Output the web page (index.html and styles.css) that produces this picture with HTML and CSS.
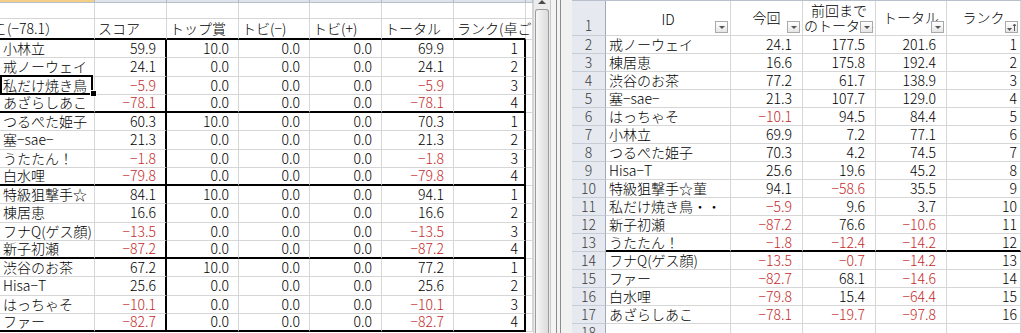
FILE: index.html
```html
<!DOCTYPE html>
<html lang="ja">
<head>
<meta charset="utf-8">
<title>Sheet</title>
<link rel="stylesheet" href="styles.css">
</head>
<body>
<div class="app">
  <div class="left">
    <div class="strip lcols">
      <div class="sc selc"></div><div class="sc"></div><div class="sc"></div><div class="sc"></div><div class="sc"></div><div class="sc"></div><div class="sc"></div><div class="sc"></div>
    </div>
    <div class="lg">
      <div class="c"></div><div class="c"></div><div class="c"></div><div class="c"></div><div class="c"></div><div class="c"></div><div class="c"></div><div class="c"></div>

      <div class="c bb hd clip"><span class="shift">こ(−78.1）</span></div><div class="c bb hd">スコア</div><div class="c bb hd">トップ賞</div><div class="c bb hd">トビ(−)</div><div class="c bb hd">トビ(+)</div><div class="c bb hd">トータル</div><div class="c bb hd">ランク(卓ごと)</div><div class="c hd"></div>

      <div class="c">小林立</div><div class="c n tb">59.9</div><div class="c n">10.0</div><div class="c n">0.0</div><div class="c n">0.0</div><div class="c n">69.9</div><div class="c r tb">1</div><div class="c"></div>
      <div class="c">戒ノーウェイ</div><div class="c n tb">24.1</div><div class="c n">0.0</div><div class="c n">0.0</div><div class="c n">0.0</div><div class="c n">24.1</div><div class="c r tb">2</div><div class="c"></div>
      <div class="c sel"><span class="clipname">私だけ焼き鳥・・</span></div><div class="c n tb neg">−5.9</div><div class="c n">0.0</div><div class="c n">0.0</div><div class="c n">0.0</div><div class="c n neg">−5.9</div><div class="c r tb">3</div><div class="c"></div>
      <div class="c bb">あざらしあこ</div><div class="c n tb bb neg">−78.1</div><div class="c n bb">0.0</div><div class="c n bb">0.0</div><div class="c n bb">0.0</div><div class="c n bb neg">−78.1</div><div class="c r tb bb">4</div><div class="c"></div>

      <div class="c">つるぺた姫子</div><div class="c n tb">60.3</div><div class="c n">10.0</div><div class="c n">0.0</div><div class="c n">0.0</div><div class="c n">70.3</div><div class="c r tb">1</div><div class="c"></div>
      <div class="c">塞−sae−</div><div class="c n tb">21.3</div><div class="c n">0.0</div><div class="c n">0.0</div><div class="c n">0.0</div><div class="c n">21.3</div><div class="c r tb">2</div><div class="c"></div>
      <div class="c">うたたん！</div><div class="c n tb neg">−1.8</div><div class="c n">0.0</div><div class="c n">0.0</div><div class="c n">0.0</div><div class="c n neg">−1.8</div><div class="c r tb">3</div><div class="c"></div>
      <div class="c bb">白水哩</div><div class="c n tb bb neg">−79.8</div><div class="c n bb">0.0</div><div class="c n bb">0.0</div><div class="c n bb">0.0</div><div class="c n bb neg">−79.8</div><div class="c r tb bb">4</div><div class="c"></div>

      <div class="c">特級狙撃手☆</div><div class="c n tb">84.1</div><div class="c n">10.0</div><div class="c n">0.0</div><div class="c n">0.0</div><div class="c n">94.1</div><div class="c r tb">1</div><div class="c"></div>
      <div class="c">棟居恵</div><div class="c n tb">16.6</div><div class="c n">0.0</div><div class="c n">0.0</div><div class="c n">0.0</div><div class="c n">16.6</div><div class="c r tb">2</div><div class="c"></div>
      <div class="c clip">フナQ(ゲス顔)</div><div class="c n tb neg">−13.5</div><div class="c n">0.0</div><div class="c n">0.0</div><div class="c n">0.0</div><div class="c n neg">−13.5</div><div class="c r tb">3</div><div class="c"></div>
      <div class="c bb">新子初瀬</div><div class="c n tb bb neg">−87.2</div><div class="c n bb">0.0</div><div class="c n bb">0.0</div><div class="c n bb">0.0</div><div class="c n bb neg">−87.2</div><div class="c r tb bb">4</div><div class="c"></div>

      <div class="c">渋谷のお茶</div><div class="c n tb">67.2</div><div class="c n">10.0</div><div class="c n">0.0</div><div class="c n">0.0</div><div class="c n">77.2</div><div class="c r tb">1</div><div class="c"></div>
      <div class="c">Hisa−T</div><div class="c n tb">25.6</div><div class="c n">0.0</div><div class="c n">0.0</div><div class="c n">0.0</div><div class="c n">25.6</div><div class="c r tb">2</div><div class="c"></div>
      <div class="c">はっちゃそ</div><div class="c n tb neg">−10.1</div><div class="c n">0.0</div><div class="c n">0.0</div><div class="c n">0.0</div><div class="c n neg">−10.1</div><div class="c r tb">3</div><div class="c"></div>
      <div class="c bb">ファー</div><div class="c n tb bb neg">−82.7</div><div class="c n bb">0.0</div><div class="c n bb">0.0</div><div class="c n bb">0.0</div><div class="c n bb neg">−82.7</div><div class="c r tb bb">4</div><div class="c"></div>
    </div>
  </div>

  <div class="vs">
    <div class="up"><span class="tri"></span></div>
    <div class="thumb"></div>
  </div>

  <div class="split"></div>

  <div class="right">
    <div class="strip rcols">
      <div class="sc corner"></div><div class="sc"></div><div class="sc"></div><div class="sc"></div><div class="sc"></div><div class="sc"></div>
    </div>
    <div class="rg">
      <div class="rh rh1">1</div>
      <div class="c hc hid">ID<span class="fb"><span class="dt"></span></span></div>
      <div class="c hc">今回<span class="fb"><span class="dt"></span></span></div>
      <div class="c hc">前回まで<br>のトータル<span class="fb"><span class="dt"></span></span></div>
      <div class="c hc">トータル<span class="fb"><span class="dt"></span></span></div>
      <div class="c hc">ランク<span class="fb sort"><svg width="11" height="9" viewBox="0 0 11 9"><path d="M1 5h5l-2.5 3z" fill="#555"/><path d="M8.5 8V1.5M7 3l1.5-2 1.5 2" stroke="#555" stroke-width="1" fill="none"/></svg></span></div>

      <div class="rh">2</div><div class="c">戒ノーウェイ</div><div class="c m">24.1</div><div class="c m">177.5</div><div class="c m">201.6</div><div class="c rr">1</div>
      <div class="rh">3</div><div class="c">棟居恵</div><div class="c m">16.6</div><div class="c m">175.8</div><div class="c m">192.4</div><div class="c rr">2</div>
      <div class="rh">4</div><div class="c">渋谷のお茶</div><div class="c m">77.2</div><div class="c m">61.7</div><div class="c m">138.9</div><div class="c rr">3</div>
      <div class="rh">5</div><div class="c">塞−sae−</div><div class="c m">21.3</div><div class="c m">107.7</div><div class="c m">129.0</div><div class="c rr">4</div>
      <div class="rh">6</div><div class="c">はっちゃそ</div><div class="c m neg">−10.1</div><div class="c m">94.5</div><div class="c m">84.4</div><div class="c rr">5</div>
      <div class="rh">7</div><div class="c">小林立</div><div class="c m">69.9</div><div class="c m">7.2</div><div class="c m">77.1</div><div class="c rr">6</div>
      <div class="rh">8</div><div class="c">つるぺた姫子</div><div class="c m">70.3</div><div class="c m">4.2</div><div class="c m">74.5</div><div class="c rr">7</div>
      <div class="rh">9</div><div class="c">Hisa−T</div><div class="c m">25.6</div><div class="c m">19.6</div><div class="c m">45.2</div><div class="c rr">8</div>
      <div class="rh">10</div><div class="c">特級狙撃手☆菫</div><div class="c m">94.1</div><div class="c m neg">−58.6</div><div class="c m">35.5</div><div class="c rr">9</div>
      <div class="rh">11</div><div class="c">私だけ焼き鳥・・</div><div class="c m neg">−5.9</div><div class="c m">9.6</div><div class="c m">3.7</div><div class="c rr">10</div>
      <div class="rh">12</div><div class="c">新子初瀬</div><div class="c m neg">−87.2</div><div class="c m">76.6</div><div class="c m neg">−10.6</div><div class="c rr">11</div>
      <div class="rh">13</div><div class="c bb">うたたん！</div><div class="c m bb neg">−1.8</div><div class="c m bb neg">−12.4</div><div class="c m bb neg">−14.2</div><div class="c rr bb">12</div>
      <div class="rh">14</div><div class="c">フナQ(ゲス顔)</div><div class="c m neg">−13.5</div><div class="c m neg">−0.7</div><div class="c m neg">−14.2</div><div class="c rr">13</div>
      <div class="rh">15</div><div class="c">ファー</div><div class="c m neg">−82.7</div><div class="c m">68.1</div><div class="c m neg">−14.6</div><div class="c rr">14</div>
      <div class="rh">16</div><div class="c">白水哩</div><div class="c m neg">−79.8</div><div class="c m">15.4</div><div class="c m neg">−64.4</div><div class="c rr">15</div>
      <div class="rh">17</div><div class="c">あざらしあこ</div><div class="c m neg">−78.1</div><div class="c m neg">−19.7</div><div class="c m neg">−97.8</div><div class="c rr">16</div>
      <div class="rh">18</div><div class="c"></div><div class="c"></div><div class="c"></div><div class="c"></div><div class="c"></div>
    </div>
  </div>
</div>
</body>
</html>
```

FILE: styles.css
```css
html, body {
  margin: 0;
  padding: 0;
  width: 1021px;
  height: 333px;
  overflow: hidden;
  background: #ffffff;
}
body {
  font-family: "Noto Sans CJK JP", "Noto Sans", sans-serif;
  font-weight: 300;
  font-size: 14px;
  color: #000;
}
.app {
  display: flex;
  width: 1021px;
  height: 333px;
}

/* generic cell */
.c {
  box-sizing: border-box;
  border-right: 1px solid #d6d6d6;
  border-bottom: 1px solid #d6d6d6;
  display: flex;
  align-items: center;
  padding: 0 3px;
  white-space: nowrap;
  line-height: 17px;
  min-width: 0;
}
.clip { overflow-x: clip; }
.n { justify-content: flex-end; padding-right: 9px; }
.r { justify-content: flex-end; padding-right: 6px; }
.m { justify-content: flex-end; padding-right: 10px; }
.rr { justify-content: flex-end; padding-right: 3px; }
.neg { color: #c42a2a; }
.tb { border-right: 2px solid #000; }
.bb { border-bottom: 2px solid #000; }

/* column header strip */
.strip {
  display: grid;
  height: 3px;
  background: #dfe4ea;
  border-bottom: 1px solid #b7c0cb;
  box-sizing: border-box;
}
.sc { border-right: 1px solid #b2bcc8; }
.selc { background: #f6cf86; }
.corner { background: #d5dbe3; }

/* left pane */
.left {
  width: 533px;
  flex: none;
  overflow: hidden;
  display: flex;
  flex-direction: column;
}
.lcols, .lg {
  grid-template-columns: 95px 72px 72px 71px 72px 72px 72px 7px;
}
.lg {
  display: grid;
  grid-template-rows: 16px 21px repeat(16, 18.25px);
}
.hd { align-items: flex-end; padding-bottom: 1px; }
.shift { margin-left: -10px; }

/* active cell selection */
.sel { position: relative; }
.clipname {
  display: block;
  width: 88px;
  overflow-x: clip;
}
.sel::before {
  content: "";
  position: absolute;
  left: 0;
  right: 1px;
  top: -2px;
  bottom: -1px;
  border: 2px solid #000;
}
.sel::after {
  content: "";
  position: absolute;
  right: -3px;
  bottom: -3px;
  width: 5px;
  height: 5px;
  background: #000;
  border: 1px solid #fff;
}

/* vertical scrollbar */
.vs {
  width: 17px;
  flex: none;
  box-sizing: border-box;
  background: #ececec;
  border-left: 1px solid #d4d4d4;
  display: flex;
  flex-direction: column;
}
.up {
  height: 9px;
  display: flex;
  justify-content: center;
  align-items: flex-start;
}
.tri {
  width: 0;
  height: 0;
  border-left: 4px solid transparent;
  border-right: 4px solid transparent;
  border-bottom: 4px solid #4b4b4b;
}
.thumb {
  flex: 1;
  margin: 0 1px;
  border: 1px solid #9c9c9c;
  border-bottom: none;
  border-radius: 3px 3px 0 0;
  background: linear-gradient(90deg, #f7f7f7, #e6e6e6 60%, #dcdcdc);
}

/* splitter */
.split {
  width: 22px;
  flex: none;
  background: linear-gradient(90deg, #c9c9c9 0 1px, #f4f4f4 1px 6px, #8c8c8c 6px 7px, #f4f4f4 7px 10px, #8c8c8c 10px 11px, #f1f1f1 11px);
}

/* right pane */
.right {
  flex: 1;
  display: flex;
  flex-direction: column;
  overflow: hidden;
}
.rcols, .rg {
  grid-template-columns: 34px 125px 72px 73px 71px 74px;
}
.rg {
  display: grid;
  grid-template-rows: 35px repeat(17, 18px);
}
.rh {
  box-sizing: border-box;
  background: #e6eaf0;
  border-right: 1px solid #9eaab9;
  border-bottom: 1px solid #c6cdd6;
  color: #3b3b3b;
  display: flex;
  align-items: center;
  justify-content: center;
  line-height: 17px;
}
.rh1 { align-items: flex-end; padding-bottom: 1px; }
.hc {
  position: relative;
  justify-content: center;
  text-align: center;
  white-space: normal;
  line-height: 15px;
  padding: 0 1px 1px;
}
.hid { padding-top: 3px; }
.fb {
  position: absolute;
  right: 2px;
  bottom: 2px;
  width: 13px;
  height: 12px;
  box-sizing: border-box;
  border: 1px solid #a9a9a9;
  background: linear-gradient(#ffffff, #e6e6e6);
  display: flex;
  align-items: center;
  justify-content: center;
}
.dt {
  width: 0;
  height: 0;
  border-left: 3px solid transparent;
  border-right: 3px solid transparent;
  border-top: 3px solid #555;
  margin-top: 1px;
}
.sort svg { display: block; }
```
